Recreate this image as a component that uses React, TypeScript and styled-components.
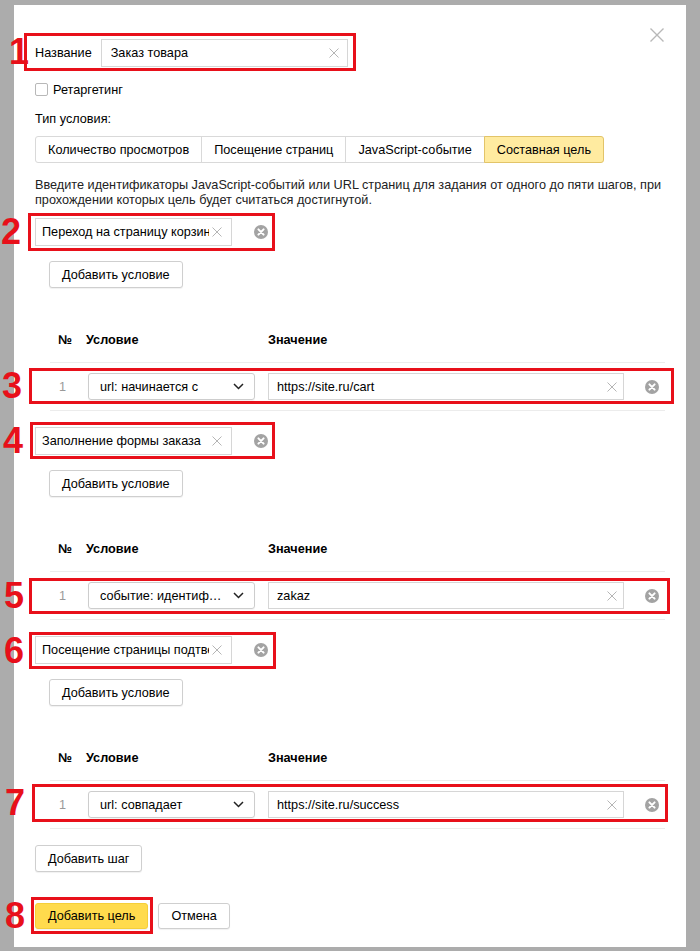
import React from "react";
import styled, { createGlobalStyle } from "styled-components";

const RED = "#e8101a";
const FONT = `12.7px "Liberation Sans", Arial, sans-serif`;

const GlobalStyle = createGlobalStyle`
  html, body {
    margin: 0;
    padding: 0;
  }
  body {
    background: #acacac;
    font: ${FONT};
    color: #000;
  }
`;

const Page = styled.div`
  width: 700px;
  height: 951px;
  box-sizing: border-box;
  padding: 5px 14px 0;
  overflow: hidden;
`;

const Dialog = styled.div`
  position: relative;
  height: 942px;
  box-sizing: border-box;
  padding: 34px 21px 0;
  background: #fff;
`;

const CloseBtn = styled.div`
  position: absolute;
  top: 23px;
  right: 22px;
  width: 14px;
  height: 14px;
  display: flex;
`;

const MarkBox = styled.div<{ $t: number; $r: number; $b: number; $l: number; $block?: boolean }>`
  position: relative;
  width: ${(p) => (p.$block ? "auto" : "fit-content")};
  margin: ${(p) => `-${p.$t}px -${p.$r}px -${p.$b}px -${p.$l}px`};
  padding: ${(p) => `${p.$t - 3}px ${p.$r - 3}px ${p.$b - 3}px ${p.$l - 3}px`};
  border: 3px solid ${RED};
`;

const MarkNum = styled.span<{ $gap: number }>`
  position: absolute;
  top: 50%;
  right: calc(100% + ${(p) => p.$gap}px);
  transform: translateY(-50%);
  font: bold 36px/1 "Liberation Sans", Arial, sans-serif;
  color: ${RED};
`;

interface Mark {
  n: number;
  t: number;
  r: number;
  b: number;
  l: number;
  gap: number;
}

function Marked({ mark, block, children }: { mark: Mark; block?: boolean; children: React.ReactNode }) {
  return (
    <MarkBox $t={mark.t} $r={mark.r} $b={mark.b} $l={mark.l} $block={block}>
      <MarkNum $gap={mark.gap}>{mark.n}</MarkNum>
      {children}
    </MarkBox>
  );
}

const NameRow = styled.div`
  display: flex;
  align-items: center;
  gap: 9px;
`;

const Field = styled.div<{ $w: number; $h?: number; $pl: number }>`
  display: flex;
  align-items: center;
  width: ${(p) => p.$w}px;
  height: ${(p) => p.$h || 28}px;
  box-sizing: border-box;
  padding-left: ${(p) => p.$pl}px;
  border: 1px solid #d6d6d6;
  background: #fff;
`;

const FieldText = styled.span`
  flex: 1;
  overflow: hidden;
  white-space: nowrap;
`;

const ClearIcon = styled.svg<{ $mr: number }>`
  flex: none;
  width: 10px;
  height: 10px;
  margin: 0 ${(p) => p.$mr}px 0 3px;
`;

const CheckRow = styled.label`
  display: flex;
  align-items: center;
  margin-top: 16px;
  height: 13px;
`;

const CheckBox = styled.span`
  width: 13px;
  height: 13px;
  box-sizing: border-box;
  border: 1px solid #b8b8b8;
  border-radius: 2px;
  margin-right: 5px;
`;

const Caption = styled.div`
  margin-top: 15px;
  line-height: 16px;
`;

const Tabs = styled.div`
  display: flex;
  margin-top: 9px;
`;

const Tab = styled.div<{ $active?: boolean }>`
  height: 27px;
  box-sizing: border-box;
  padding: 0 12px;
  display: flex;
  align-items: center;
  border: 1px solid ${(p) => (p.$active ? "#e2c469" : "#d9d9d9")};
  background: ${(p) => (p.$active ? "#ffeba0" : "#fff")};
  margin-left: -1px;
  &:first-child {
    margin-left: 0;
    border-radius: 3px 0 0 3px;
  }
  &:last-child {
    border-radius: 0 3px 3px 0;
  }
`;

const Hint = styled.p`
  margin: 15px 0 0;
  line-height: 15px;
  color: #222;
  white-space: nowrap;
`;

const Steps = styled.div`
  display: flex;
  flex-direction: column;
  gap: 16px;
  margin-top: 10px;
`;

const TagRow = styled.div`
  display: flex;
  align-items: center;
  gap: 22px;
`;

const Button = styled.button<{ $yellow?: boolean; $indent?: number }>`
  display: block;
  height: ${(p) => (p.$yellow ? 26 : 27)}px;
  padding: 0 12px;
  margin-left: ${(p) => p.$indent || 0}px;
  font: ${FONT};
  color: #000;
  border: 1px solid ${(p) => (p.$yellow ? "#f5cf3a" : "#cfcfcf")};
  border-radius: 3px;
  background: ${(p) => (p.$yellow ? "#ffdb4d" : "#fff")};
  box-shadow: 0 1px 1px rgba(0, 0, 0, 0.06);
`;

const AddCond = styled(Button)`
  margin-top: 15px;
`;

const CancelButton = styled(Button)`
  height: 26px;
`;

const Table = styled.div`
  margin-left: 15px;
`;

const Grid = styled.div`
  display: grid;
  grid-template-columns: 36px 182px 356px 1fr;
  align-items: center;
`;

const Head = styled(Grid)`
  margin-top: 40px;
  height: 24px;
  padding-bottom: 10px;
  border-bottom: 1px solid #ececec;
  font-weight: bold;
`;

const HeadCell = styled.div<{ $pl?: number }>`
  padding-left: ${(p) => p.$pl || 0}px;
`;

const DataRow = styled.div`
  padding: 10px 0;
  border-bottom: 1px solid #ececec;
`;

const Index = styled.div`
  padding-left: 9px;
  color: #999;
`;

const Select = styled.div`
  display: flex;
  align-items: center;
  width: 167px;
  height: 27px;
  box-sizing: border-box;
  margin-left: 2px;
  padding: 0 10px 0 11px;
  border: 1px solid #cdcdcd;
  border-radius: 3px;
  box-shadow: 0 1px 1px rgba(0, 0, 0, 0.05);
`;

const SelectText = styled.span`
  flex: 1;
  overflow: hidden;
  white-space: nowrap;
  text-overflow: ellipsis;
  padding-right: 6px;
`;

const RemoveCell = styled.div`
  display: flex;
  justify-content: flex-end;
  padding-right: 6px;
`;

const Footer = styled.div`
  display: flex;
  gap: 10px;
  margin-top: 31px;
`;

const AddStep = styled(Button)`
  margin-top: 16px;
`;

const Cross = ({ mr }: { mr: number }) => (
  <ClearIcon $mr={mr} viewBox="0 0 10 10">
    <path d="M0.5 0.5 L9.5 9.5 M9.5 0.5 L0.5 9.5" stroke="#b5b5b5" strokeWidth="1" fill="none" />
  </ClearIcon>
);

const RemoveIcon = () => (
  <svg width="14" height="14" viewBox="0 0 14 14">
    <circle cx="7" cy="7" r="7" fill="#a3a3a3" />
    <path d="M4.4 4.4 L9.6 9.6 M9.6 4.4 L4.4 9.6" stroke="#fff" strokeWidth="2" strokeLinecap="round" />
  </svg>
);

const Chevron = () => (
  <svg width="11" height="7" viewBox="0 0 11 7">
    <path d="M1 1 L5.5 5.5 L10 1" stroke="#222" strokeWidth="1.5" fill="none" />
  </svg>
);

interface Step {
  tag: string;
  cond: string;
  value: string;
  tagMark: Mark;
  rowMark: Mark;
}

const steps: Step[] = [
  {
    tag: "Переход на страницу корзины",
    cond: "url: начинается с",
    value: "https://site.ru/cart",
    tagMark: { n: 2, t: 5, r: 7, b: 5, l: 7, gap: 10 },
    rowMark: { n: 3, t: 5, r: 9, b: 4, l: 21, gap: 10 },
  },
  {
    tag: "Заполнение формы заказа",
    cond: "событие: идентификатор",
    value: "zakaz",
    tagMark: { n: 4, t: 5, r: 7, b: 4, l: 5, gap: 10 },
    rowMark: { n: 5, t: 4, r: 5, b: 5, l: 21, gap: 8 },
  },
  {
    tag: "Посещение страницы подтверждения",
    cond: "url: совпадает",
    value: "https://site.ru/success",
    tagMark: { n: 6, t: 4, r: 8, b: 5, l: 6, gap: 8 },
    rowMark: { n: 7, t: 7, r: 3, b: 4, l: 18, gap: 10 },
  },
];

function StepBlock({ step }: { step: Step }) {
  return (
    <div>
      <Marked mark={step.tagMark}>
        <TagRow>
          <Field $w={197} $pl={6}>
            <FieldText>{step.tag}</FieldText>
            <Cross mr={9} />
          </Field>
          <RemoveIcon />
        </TagRow>
      </Marked>
      <AddCond $indent={14}>Добавить условие</AddCond>
      <Table>
        <Head>
          <HeadCell $pl={8}>№</HeadCell>
          <HeadCell>Условие</HeadCell>
          <HeadCell>Значение</HeadCell>
          <div />
        </Head>
        <DataRow>
          <Marked mark={step.rowMark} block>
            <Grid>
              <Index>1</Index>
              <Select>
                <SelectText>{step.cond}</SelectText>
                <Chevron />
              </Select>
              <Field $w={356} $h={27} $pl={8}>
                <FieldText>{step.value}</FieldText>
                <Cross mr={6} />
              </Field>
              <RemoveCell>
                <RemoveIcon />
              </RemoveCell>
            </Grid>
          </Marked>
        </DataRow>
      </Table>
    </div>
  );
}

export default function App() {
  return (
    <Page>
      <GlobalStyle />
      <Dialog>
        <CloseBtn>
          <svg width="14" height="14" viewBox="0 0 14 14">
            <path d="M0.5 0.5 L13.5 13.5 M13.5 0.5 L0.5 13.5" stroke="#b8b8b8" strokeWidth="1.4" fill="none" />
          </svg>
        </CloseBtn>

        <Marked mark={{ n: 1, t: 6, r: 8, b: 4, l: 11, gap: -2 }}>
          <NameRow>
            <span>Название</span>
            <Field $w={247} $pl={9}>
              <FieldText>Заказ товара</FieldText>
              <Cross mr={8} />
            </Field>
          </NameRow>
        </Marked>

        <CheckRow>
          <CheckBox />
          Ретаргетинг
        </CheckRow>

        <Caption>Тип условия:</Caption>
        <Tabs>
          <Tab>Количество просмотров</Tab>
          <Tab>Посещение страниц</Tab>
          <Tab>JavaScript-событие</Tab>
          <Tab $active>Составная цель</Tab>
        </Tabs>

        <Hint>
          Введите идентификаторы JavaScript-событий или URL страниц для задания от одного до пяти шагов, при
          <br />
          прохождении которых цель будет считаться достигнутой.
        </Hint>

        <Steps>
          {steps.map((s) => (
            <StepBlock key={s.tag} step={s} />
          ))}
        </Steps>

        <AddStep>Добавить шаг</AddStep>

        <Footer>
          <Marked mark={{ n: 8, t: 6, r: 5, b: 5, l: 4, gap: 9 }}>
            <Button $yellow>Добавить цель</Button>
          </Marked>
          <CancelButton>Отмена</CancelButton>
        </Footer>
      </Dialog>
    </Page>
  );
}
